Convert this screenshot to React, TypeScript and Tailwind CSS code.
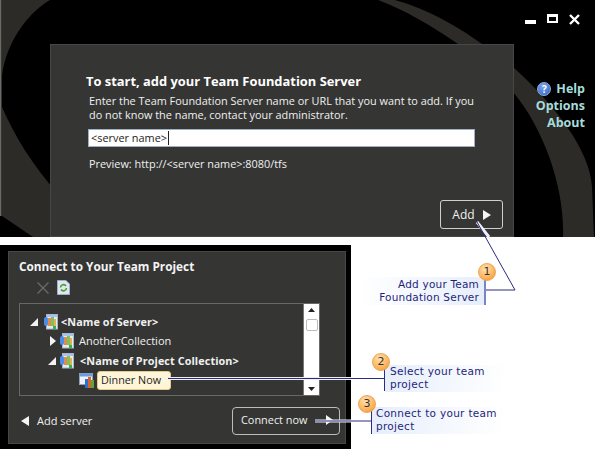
import React from 'react';

const uiFont = "font-['Open_Sans','Noto_Sans',sans-serif]";

// Team project icon used in the tree
const ServerIcon = () => (
    <svg width="14" height="16" viewBox="0 0 14 16" className="shrink-0">
        <rect x="2.5" y="0.5" width="11" height="14.5" fill="#e4eaf2" stroke="#a9b5c6" />
        <rect x="3" y="1" width="10" height="2" fill="#a5c3ee" />
        <rect x="0" y="3" width="4" height="9" rx="2" fill="#4a8cea" />
        <rect x="4" y="4" width="3" height="8" fill="#e28a50" />
        <rect x="7" y="3" width="3" height="9" fill="#7cc25e" />
        <rect x="10" y="5" width="2" height="7" fill="#e6b04c" />
        <rect x="9" y="12" width="3" height="3" fill="#2fb34a" />
    </svg>
);

const TriangleDown = () => (
    <svg width="8" height="8" viewBox="0 0 8 8" className="shrink-0">
        <path d="M0 8 L8 8 L8 0 Z" fill="#f2f2f2" />
    </svg>
);

const Arrow = ({ left = false, small = false }: { left?: boolean; small?: boolean }) => (
    <svg width={small ? 6 : 8} height="10" viewBox="0 0 8 10" preserveAspectRatio="none" className="shrink-0">
        <path d={left ? 'M8 0 L8 10 L0 5 Z' : 'M0 0 L0 10 L8 5 Z'} fill="#f5f5f5" />
    </svg>
);

const Badge = ({ n, className }: { n: number; className: string }) => (
    <div className={`absolute w-[18px] h-[18px] rounded-full border border-[#e9a653] bg-[radial-gradient(circle_at_40%_30%,#ffe2b0,#fdb35c_60%,#f08f22)] flex items-center justify-center font-['DejaVu_Sans',sans-serif] text-[11px] text-[#333] ${className}`}>
        {n}
    </div>
);

const TopWindow = () => (
    <div className="relative h-[237px] bg-black overflow-hidden">
        {/* background swoosh */}
        <svg width="595" height="237" viewBox="0 0 595 237" className="absolute left-0 top-0">
            <path d="M2 0 L50 0 C26 14 6 44 2 76 Z" fill="#2c2b27" />
            <path d="M2 107 C14 135 32 165 60 196 L60 237 L33 237 L2 216 Z" fill="#2c2b27" />
            <path d="M378 0 L395 0 C430 10 460 28 482 44 C500 55 510 62 513 67 C555 105 590 150 592 187 L594 237 L563 237 C565 190 545 130 513 92 C495 72 475 55 458 44 C430 25 405 10 378 0 Z" fill="#2c2b27" />
            <rect x="0" y="0" width="1.5" height="216" fill="#6a6a66" />
        </svg>

        {/* window buttons */}
        <div className="absolute left-[525px] top-[14px] flex items-start gap-[11px]">
            <div className="w-[11px] h-[4px] bg-white mt-[6px]" />
            <div className="w-[11px] h-[9px] border-2 border-t-[3px] border-white" />
            <svg width="11" height="11" viewBox="0 0 11 11">
                <path d="M1 1 L10 10 M10 1 L1 10" stroke="white" strokeWidth="2.4" />
            </svg>
        </div>

        {/* side links */}
        <div className={`absolute right-[10px] top-[80px] flex flex-col items-end text-[12.5px] leading-[17px] font-bold text-[#a6dcdc] ${uiFont}`}>
            <div className="flex items-center gap-[5px]">
                <div className="w-[14px] h-[14px] rounded-full bg-[radial-gradient(circle_at_40%_30%,#7da6ee,#2d5fc4)] border border-[#8fb0e6] flex items-center justify-center text-[10px] leading-none text-white">?</div>
                Help
            </div>
            <div>Options</div>
            <div>About</div>
        </div>

        <div className={`relative ml-[50px] top-[44px] w-[464px] h-[193px] bg-[#353634] border border-[#474846] pt-[27px] pl-[35px] text-[#f0f0f0] ${uiFont}`}>
            <h1 className="text-[12.9px] leading-[18px] font-bold text-white">To start, add your Team Foundation Server</h1>
            <p className="mt-[4px] ml-[3px] text-[10.9px] leading-[13.5px] w-[400px]">
                Enter the Team Foundation Server name or URL that you want to add. If you do not know the name, contact your administrator.
            </p>
            <div className="mt-[8px] ml-[2px] w-[387px] h-[18px] bg-white border border-[#9fb0c4] flex items-center pl-[2px] text-[10.9px] text-[#222]">
                &lt;server name&gt;<span className="w-px h-[14px] bg-[#222] ml-px" />
            </div>
            <p className="mt-[9px] ml-[3px] text-[10.9px] leading-[16px]">Preview: http://&lt;server name&gt;:8080/tfs</p>
            <button className="absolute left-[389px] top-[155px] w-[63px] h-[29px] border border-[#cfcfcf] rounded-[3px] flex items-center justify-center gap-[8px] text-[12px] text-[#f0f0f0]">
                Add <Arrow />
            </button>
        </div>
    </div>
);

const TreeRow = ({ indent, children }: { indent: string; children: React.ReactNode }) => (
    <div className={`flex items-center h-[19.5px] ${indent}`}>{children}</div>
);

const BottomWindow = () => (
    <div className={`w-[351px] h-[204px] bg-black pt-[6px] pl-[8px] ${uiFont}`}>
        <div className="relative w-[338px] h-[193px] bg-[#353634] border border-[#474846] text-[#f0f0f0]">
            <h2 className="absolute left-[10px] top-[6px] text-[11.8px] leading-[16px] font-bold text-[#f4f4f4]">Connect to Your Team Project</h2>
            <div className="flex items-center gap-[8px] ml-[28px] mt-[28px]">
                <svg width="12" height="12" viewBox="0 0 12 12">
                    <path d="M0.5 0.5 L11.5 11.5 M11.5 0.5 L0.5 11.5" stroke="#6a6a68" strokeWidth="1.4" />
                </svg>
                <svg width="13" height="15" viewBox="0 0 13 15">
                    <path d="M0.5 0.5 H9 L12.5 4 V14.5 H0.5 Z" fill="#dfe7f2" stroke="#9fb1c9" />
                    <path d="M3.5 7.5 A3 3 0 0 1 9 6 M9.5 8 A3 3 0 0 1 4 9.5" fill="none" stroke="#4f9e2a" strokeWidth="1.6" />
                </svg>
            </div>
            <div className="relative mt-[8px] ml-[10px] w-[301px] h-[93px] border border-[#686967] pt-[8px] pl-[10px]">
                <TreeRow indent="gap-[6px]">
                    <TriangleDown />
                    <ServerIcon />
                    <span className="-ml-[3px] text-[10.8px] font-bold tracking-[0.1px]">&lt;Name of Server&gt;</span>
                </TreeRow>
                <TreeRow indent="ml-[20px] gap-[4px]">
                    <Arrow small />
                    <ServerIcon />
                    <span className="ml-px text-[11px]">AnotherCollection</span>
                </TreeRow>
                <TreeRow indent="ml-[18px] gap-[4px]">
                    <TriangleDown />
                    <ServerIcon />
                    <span className="ml-[2px] text-[10.8px] font-bold tracking-[0.1px]">&lt;Name of Project Collection&gt;</span>
                </TreeRow>
                <TreeRow indent="ml-[49px] gap-px">
                    <svg width="17" height="15" viewBox="0 0 17 15" className="shrink-0">
                        <rect x="0.5" y="0.5" width="13" height="11" fill="#eef3fb" stroke="#8fa3bd" />
                        <rect x="0.5" y="0.5" width="13" height="3" fill="#6f9be0" />
                        <rect x="6" y="6" width="3" height="9" fill="#2f6fd0" />
                        <rect x="9" y="4" width="3" height="11" fill="#d9642a" />
                        <rect x="12" y="7" width="3" height="8" fill="#58a83c" />
                    </svg>
                    <span className="h-[19px] w-[74px] rounded-[3px] bg-[#fff5d8] border border-[#e8c98a] flex items-center pl-[3px] text-[10.8px] text-[#222]">Dinner Now</span>
                </TreeRow>
                {/* scrollbar */}
                <div className="absolute right-0 top-0 w-[16px] h-full bg-white border-l border-[#777] flex flex-col items-center justify-between py-[4px]">
                    <svg width="7" height="4" viewBox="0 0 7 4"><path d="M0 4 L7 4 L3.5 0 Z" fill="#222" /></svg>
                    <div className="absolute top-[15px] w-[12px] h-[12px] border border-[#bbb] rounded-[2px] bg-white" />
                    <svg width="7" height="4" viewBox="0 0 7 4"><path d="M0 0 L7 0 L3.5 4 Z" fill="#222" /></svg>
                </div>
            </div>
            <div className="absolute left-[12px] top-[161px] flex items-center gap-[8px] text-[11px]">
                <Arrow left /> Add server
            </div>
            <button className="absolute left-[223px] top-[155px] w-[108px] h-[28px] pb-[2px] border border-[#bdbdbd] rounded-[4px] text-left pl-[8px] text-[10.9px]">
                Connect now
            </button>
        </div>
    </div>
);

const Callout = ({ className, children }: { className: string; children: React.ReactNode }) => (
    <div className={`absolute font-['DejaVu_Sans',sans-serif] text-[10.5px] leading-[13px] text-[#1f1f7a] ${className}`}>
        {children}
    </div>
);

// Page: two windows plus annotations drawn on top
export default function App() {
    return (
        <div className="relative w-[595px] h-[449px] bg-white overflow-hidden">
            <TopWindow />
            <div className="mt-[8px]">
                <BottomWindow />
            </div>

            <Callout className="left-[362px] top-[277px] w-[123px] h-[28px] pt-px text-right pr-[6px] tracking-[0.2px] bg-[linear-gradient(100deg,#ffffff,#e6eefb)]">
                Add your Team<br />Foundation Server
            </Callout>
            <Callout className="left-[385px] top-[365px] w-[120px] h-[27px] pl-[5px] tracking-[0.3px] bg-[linear-gradient(100deg,#e6eefb,#ffffff)]">
                Select your team<br />project
            </Callout>
            <Callout className="left-[372px] top-[407px] w-[133px] h-[27px] pl-[4px] tracking-[0.3px] bg-[linear-gradient(100deg,#e6eefb,#ffffff)]">
                Connect to your team<br />project
            </Callout>

            {/* leader lines */}
            <svg width="595" height="449" viewBox="0 0 595 449" className="absolute left-0 top-0 pointer-events-none">
                <path d="M477 222 L489 237" fill="none" stroke="#eeeef6" strokeWidth="3" />
                <path d="M168 378.5 H351 M315 421 H351" fill="none" stroke="#eeeef6" strokeWidth="3" />
                <path d="M326 415 L333 420 L326 425 Z" fill="#f5f5f5" />
                <path d="M477 222 L515 290 L486 290" fill="none" stroke="#2b2b80" strokeWidth="1" />
                <path d="M485 277 V305" stroke="#7d84c4" strokeWidth="2" />
                <path d="M168 378.5 H384" stroke="#2b2b80" strokeWidth="1" />
                <path d="M384.5 364 V391" stroke="#2b2b80" strokeWidth="1" />
                <path d="M315 421 H371" stroke="#2b2b80" strokeWidth="1" />
                <path d="M371.5 407 V434" stroke="#2b2b80" strokeWidth="1" />
            </svg>

            <Badge n={1} className="left-[478px] top-[263px]" />
            <Badge n={2} className="left-[372px] top-[353px]" />
            <Badge n={3} className="left-[358px] top-[395px]" />
        </div>
    );
}
